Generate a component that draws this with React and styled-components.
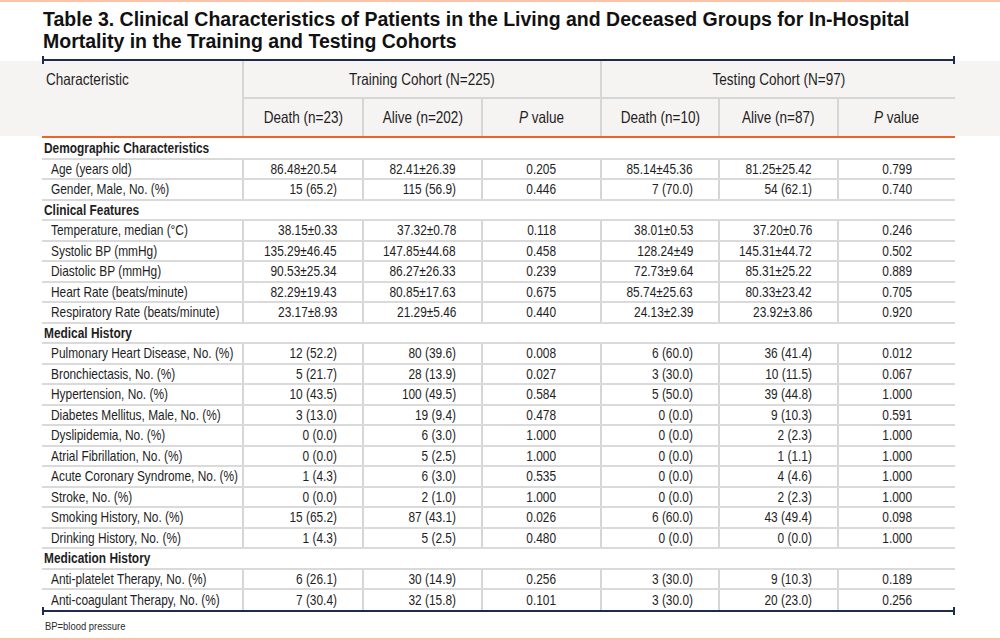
import React from "react";
import styled, { createGlobalStyle } from "styled-components";

const sections = [
  {
    title: "Demographic Characteristics",
    rows: [
      ["Age (years old)", "86.48±20.54", "82.41±26.39", "0.205", "85.14±45.36", "81.25±25.42", "0.799"],
      ["Gender, Male, No. (%)", "15 (65.2)", "115 (56.9)", "0.446", "7 (70.0)", "54 (62.1)", "0.740"],
    ],
  },
  {
    title: "Clinical Features",
    rows: [
      ["Temperature, median (°C)", "38.15±0.33", "37.32±0.78", "0.118", "38.01±0.53", "37.20±0.76", "0.246"],
      ["Systolic BP (mmHg)", "135.29±46.45", "147.85±44.68", "0.458", "128.24±49", "145.31±44.72", "0.502"],
      ["Diastolic BP (mmHg)", "90.53±25.34", "86.27±26.33", "0.239", "72.73±9.64", "85.31±25.22", "0.889"],
      ["Heart Rate (beats/minute)", "82.29±19.43", "80.85±17.63", "0.675", "85.74±25.63", "80.33±23.42", "0.705"],
      ["Respiratory Rate (beats/minute)", "23.17±8.93", "21.29±5.46", "0.440", "24.13±2.39", "23.92±3.86", "0.920"],
    ],
  },
  {
    title: "Medical History",
    rows: [
      ["Pulmonary Heart Disease, No. (%)", "12 (52.2)", "80 (39.6)", "0.008", "6 (60.0)", "36 (41.4)", "0.012"],
      ["Bronchiectasis, No. (%)", "5 (21.7)", "28 (13.9)", "0.027", "3 (30.0)", "10 (11.5)", "0.067"],
      ["Hypertension, No. (%)", "10 (43.5)", "100 (49.5)", "0.584", "5 (50.0)", "39 (44.8)", "1.000"],
      ["Diabetes Mellitus, Male, No. (%)", "3 (13.0)", "19 (9.4)", "0.478", "0 (0.0)", "9 (10.3)", "0.591"],
      ["Dyslipidemia, No. (%)", "0 (0.0)", "6 (3.0)", "1.000", "0 (0.0)", "2 (2.3)", "1.000"],
      ["Atrial Fibrillation, No. (%)", "0 (0.0)", "5 (2.5)", "1.000", "0 (0.0)", "1 (1.1)", "1.000"],
      ["Acute Coronary Syndrome, No. (%)", "1 (4.3)", "6 (3.0)", "0.535", "0 (0.0)", "4 (4.6)", "1.000"],
      ["Stroke, No. (%)", "0 (0.0)", "2 (1.0)", "1.000", "0 (0.0)", "2 (2.3)", "1.000"],
      ["Smoking History, No. (%)", "15 (65.2)", "87 (43.1)", "0.026", "6 (60.0)", "43 (49.4)", "0.098"],
      ["Drinking History, No. (%)", "1 (4.3)", "5 (2.5)", "0.480", "0 (0.0)", "0 (0.0)", "1.000"],
    ],
  },
  {
    title: "Medication History",
    rows: [
      ["Anti-platelet Therapy, No. (%)", "6 (26.1)", "30 (14.9)", "0.256", "3 (30.0)", "9 (10.3)", "0.189"],
      ["Anti-coagulant Therapy, No. (%)", "7 (30.4)", "32 (15.8)", "0.101", "3 (30.0)", "20 (23.0)", "0.256"],
    ],
  },
];

const colWidths = [201, 120, 119, 119, 118, 119, 117];
const pCols = [3, 6];

const Cols = () => (
  <colgroup>
    {colWidths.map((w, i) => (
      <col key={`col${i}`} style={{ width: w }} />
    ))}
  </colgroup>
);

const PValue = () => (
  <Narrow $origin="center">
    <i>P</i> value
  </Narrow>
);

const App = () => {
  const lastSection = sections.length - 1;
  return (
    <Page>
      <GlobalStyle />
      <Title>
        Table 3. Clinical Characteristics of Patients in the Living and Deceased Groups for In-Hospital
        <br />
        Mortality in the Training and Testing Cohorts
      </Title>

      <Rule $gap={7} />

      {/* Header band */}
      <HeadBand>
        <Table>
          <Cols />
          <thead>
            <tr>
              <HeadCell rowSpan={2}>
                <Narrow $origin="left">Characteristic</Narrow>
              </HeadCell>
              <GroupCell colSpan={3}>
                <Narrow $origin="center">Training Cohort (N=225)</Narrow>
              </GroupCell>
              <GroupCell colSpan={3}>
                <Narrow $origin="center">Testing Cohort (N=97)</Narrow>
              </GroupCell>
            </tr>
            <tr>
              <SubCell>
                <Narrow $origin="center">Death (n=23)</Narrow>
              </SubCell>
              <SubCell>
                <Narrow $origin="center">Alive (n=202)</Narrow>
              </SubCell>
              <SubCell>
                <PValue />
              </SubCell>
              <SubCell>
                <Narrow $origin="center">Death (n=10)</Narrow>
              </SubCell>
              <SubCell>
                <Narrow $origin="center">Alive (n=87)</Narrow>
              </SubCell>
              <SubCell>
                <PValue />
              </SubCell>
            </tr>
          </thead>
        </Table>
      </HeadBand>

      <AccentLine />

      {/* Body */}
      <Table $inset>
        <Cols />
        <tbody>
          {sections.map((section, si) => (
            <React.Fragment key={section.title}>
              <tr>
                <SectionCell colSpan={7}>
                  <Narrow $origin="left">{section.title}</Narrow>
                </SectionCell>
              </tr>
              {section.rows.map((row, ri) => {
                const last = si === lastSection && ri === section.rows.length - 1;
                return (
                  <tr key={row[0]}>
                    {row.map((value, ci) => {
                      if (ci === 0) {
                        return (
                          <LabelCell key={`c${ci}`} $last={last}>
                            <Narrow $origin="left">{value}</Narrow>
                          </LabelCell>
                        );
                      }
                      const center = pCols.includes(ci);
                      return (
                        <ValueCell key={`c${ci}`} $last={last} $center={center}>
                          <Narrow $origin={center ? "center" : "right"}>{value}</Narrow>
                        </ValueCell>
                      );
                    })}
                  </tr>
                );
              })}
            </React.Fragment>
          ))}
        </tbody>
      </Table>

      <Rule />

      <Footnote>
        <Narrow $origin="left">BP=blood pressure</Narrow>
      </Footnote>
    </Page>
  );
};

// Styled Components started below
// ---------------------------------------------------------------------------------------------
const GlobalStyle = createGlobalStyle`
  * { box-sizing: border-box; }
  body {
    margin: 0;
    background: #ffffff;
    font-family: "Liberation Sans", Arial, Helvetica, sans-serif;
    color: #1e1e1e;
  }
`;

const Page = styled.div`
  width: 1000px;
  height: 640px;
  display: flex;
  flex-direction: column;
  border-top: 2px solid #fbc2a9;
  border-bottom: 2px solid #fbc2a9;
  overflow: hidden;
`;

const Title = styled.h1`
  margin: 0;
  padding: 6px 0 0 43px;
  font-size: 19.5px;
  line-height: 22px;
  font-weight: 700;
  color: #111111;
`;

// condensed face: the page is set in a narrow grotesque, which is not installed
const Narrow = styled.span`
  display: inline-block;
  white-space: nowrap;
  transform: scaleX(0.82);
  transform-origin: ${(p) => p.$origin} center;

  & i {
    font-style: italic;
  }
`;

const Rule = styled.div`
  position: relative;
  margin: ${(p) => p.$gap || 0}px 0 0 42px;
  width: 913px;
  height: 2px;
  flex: none;
  background: #1d2b53;

  &::before,
  &::after {
    content: "";
    position: absolute;
    top: -3px;
    width: 2px;
    height: 8px;
    background: #1d2b53;
  }
  &::before {
    left: 0;
  }
  &::after {
    right: 0;
  }
`;

const HeadBand = styled.div`
  background: #f6f4f3;
  padding-left: 42px;
  flex: none;
`;

const AccentLine = styled.div`
  margin-left: 42px;
  width: 913px;
  height: 2px;
  flex: none;
  background: #f0622a;
`;

const Table = styled.table`
  width: 913px;
  margin-left: ${(p) => (p.$inset ? "42px" : "0")};
  table-layout: fixed;
  border-collapse: collapse;
  flex: none;
  align-self: flex-start;
`;

const HeadCell = styled.th`
  height: 36px;
  padding: 0 0 0 4px;
  vertical-align: top;
  text-align: left;
  font-weight: 400;
  font-size: 16.5px;
  line-height: 36px;
`;

const GroupCell = styled.th`
  height: 37px;
  padding: 0;
  text-align: center;
  font-weight: 400;
  font-size: 16.5px;
  border-left: 2px solid #d6d6d6;
  border-bottom: 2px solid #d6d6d6;
`;

const SubCell = styled.th`
  height: 38px;
  padding: 0;
  text-align: center;
  font-weight: 400;
  font-size: 16.5px;
  border-left: 2px solid #d6d6d6;
`;

const SectionCell = styled.td`
  height: 20.5px;
  padding: 0 0 0 2px;
  font-size: 14.5px;
  font-weight: 700;
  line-height: 18px;
  border-bottom: 2px solid #dadada;
`;

const LabelCell = styled.td`
  height: 20.5px;
  padding: 0 0 0 9px;
  font-size: 14.5px;
  line-height: 18px;
  white-space: nowrap;
  border-bottom: ${(p) => (p.$last ? "none" : "2px solid #dadada")};
`;

const ValueCell = styled.td`
  height: 20.5px;
  padding: ${(p) => (p.$center ? "0" : "0 25px 0 0")};
  font-size: 14.5px;
  line-height: 18px;
  white-space: nowrap;
  text-align: ${(p) => (p.$center ? "center" : "right")};
  border-left: 2px solid #d6d6d6;
  border-bottom: ${(p) => (p.$last ? "none" : "2px solid #dadada")};
`;

const Footnote = styled.div`
  margin: 7px 0 0 45px;
  font-size: 11.5px;
  line-height: 14px;
  color: #2a2a2a;
`;

export default App;
